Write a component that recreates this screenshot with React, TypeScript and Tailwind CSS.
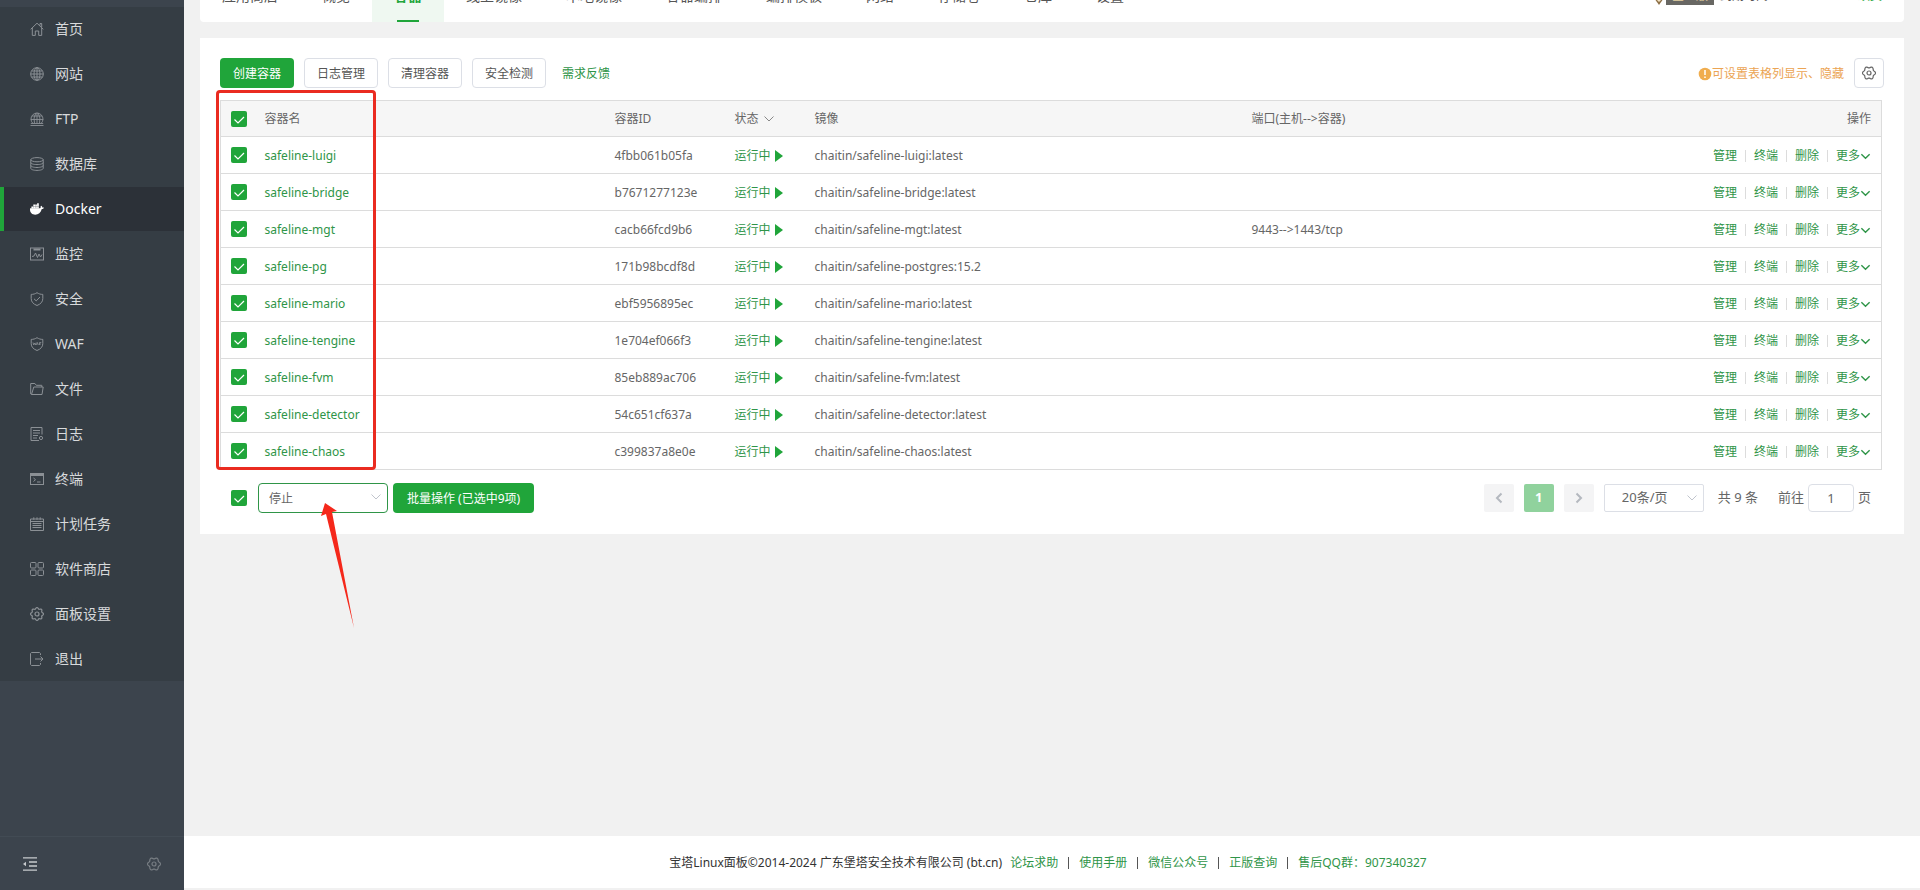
import type { ReactNode, SVGProps } from 'react'

type Container = { name: string; id: string; image: string; port?: string }

const containers: Container[] = [
  { name: 'safeline-luigi', id: '4fbb061b05fa', image: 'chaitin/safeline-luigi:latest' },
  { name: 'safeline-bridge', id: 'b7671277123e', image: 'chaitin/safeline-bridge:latest' },
  { name: 'safeline-mgt', id: 'cacb66fcd9b6', image: 'chaitin/safeline-mgt:latest', port: '9443-->1443/tcp' },
  { name: 'safeline-pg', id: '171b98bcdf8d', image: 'chaitin/safeline-postgres:15.2' },
  { name: 'safeline-mario', id: 'ebf5956895ec', image: 'chaitin/safeline-mario:latest' },
  { name: 'safeline-tengine', id: '1e704ef066f3', image: 'chaitin/safeline-tengine:latest' },
  { name: 'safeline-fvm', id: '85eb889ac706', image: 'chaitin/safeline-fvm:latest' },
  { name: 'safeline-detector', id: '54c651cf637a', image: 'chaitin/safeline-detector:latest' },
  { name: 'safeline-chaos', id: 'c399837a8e0e', image: 'chaitin/safeline-chaos:latest' },
]

const tabs = ['应用商店', '概览', '容器', '线上镜像', '本地镜像', '容器编排', '编排模板', '网络', '存储卷', '仓库', '设置']

function Icon({ children, ...rest }: { children: ReactNode } & SVGProps<SVGSVGElement>) {
  return (
    <svg viewBox="0 0 14 14" className="size-3.5 shrink-0" fill="none" stroke="currentColor" strokeWidth="1" aria-hidden="true" {...rest}>
      {children}
    </svg>
  )
}

// closed wavy outline with the given number of teeth, centred in the 14px box
function gearPath(teeth: number): string {
  const points = Array.from({ length: 72 }, (_, i) => {
    const a = (i / 72) * Math.PI * 2
    const r = 5.8 + 0.7 * Math.cos(teeth * a)
    return `${(7 + r * Math.cos(a)).toFixed(2)} ${(7 + r * Math.sin(a)).toFixed(2)}`
  })
  return `M${points.join('L')}Z`
}

const gear = <><path d={gearPath(8)} strokeWidth="1.200" /><circle cx="7" cy="7" r="2" strokeWidth="1.200" /></>
const hexGear = <><path d={gearPath(6)} strokeWidth="1.200" /><circle cx="7" cy="7" r="2" strokeWidth="1.200" /></>

const menu: { label: string; icon: ReactNode }[] = [
  { label: '首页', icon: <><path d="M.7 7.300 7 1.200l6.300 6.100M2.300 6v7.400h3V9h3.400v4.400h3V6M10 3.500v-2h1.700v3.700" /></> },
  { label: '网站', icon: <><circle cx="7" cy="7" r="6.300" /><ellipse cx="7" cy="7" rx="3" ry="6.300" /><path d="M7 .7v12.600M.7 7h12.600M1.600 4h10.800M1.600 10h10.800" /></> },
  { label: 'FTP', icon: <><path d="M3 11.500a6 6 0 1 1 8 0M.5 13.500h13M.8 11.500h12.400M7 .8v10.700M.8 7.500h12.400M2 4h10M4.500 11.500Q3 6 5.800 1M9.500 11.500Q11 6 8.200 1" strokeWidth=".9" /></> },
  { label: '数据库', icon: <><ellipse cx="7" cy="2.700" rx="6.200" ry="2.100" /><path d="M.8 2.700v8.600c0 1.200 2.800 2.100 6.200 2.100s6.200-.9 6.200-2.100V2.700M.8 5.500C.8 6.700 3.600 7.600 7 7.600s6.200-.9 6.200-2.100M.8 8.400c0 1.200 2.800 2.100 6.200 2.100s6.200-.9 6.200-2.100" /></> },
  {
    label: 'Docker',
    icon: (
      <g fill="currentColor" stroke="none">
        <path d="M.1 6.300h9.600c.8 0 1.100-.8.900-2l.7-.5c.7.500 1 1.100 1 1.700.7-.1 1.300 0 1.700.3-.4.900-1.200 1.300-2.200 1.300-1.100 3.700-3.300 5.600-6.600 5.600C1.800 12.700-.5 10.500.1 6.300z" />
        <path d="M1.400 4.500h1.700v2H1.400zM3.300 4.500H5v2H3.300zM5.200 4.500h1.700v2H5.200zM7.100 4.500h1.700v2H7.100zM3.300 2.600H5v1.700H3.300zM5.200 2.600h1.700v1.700H5.200zM7.100 1.300h1.700v3H7.100z" />
      </g>
    ),
  },
  { label: '监控', icon: <><rect x=".5" y="1" width="13" height="12" /><path d="M3.500 2.500h7" strokeWidth="2" /><path d="m2 9.500 2-.5 1.500-3 2 4.500L9 7l1.500 3L12 7.500" /></> },
  { label: '安全', icon: <><path d="M7 .7c1.800 1.200 3.700 1.700 5.800 1.700v4.200c0 3.200-2 5.400-5.800 6.900-3.800-1.500-5.800-3.700-5.800-6.900V2.400C3.300 2.400 5.200 1.900 7 .7z" /><path d="m4 6.800 2.200 2.100L10 5" /></> },
  { label: 'WAF', icon: <><path d="M7 .7c1.800 1.200 3.700 1.700 5.800 1.700v4.200c0 3.200-2 5.400-5.800 6.900-3.800-1.500-5.800-3.700-5.800-6.900V2.400C3.300 2.400 5.200 1.900 7 .7z" /><path d="M3 5.500 3.700 8l.9-2 .9 2 .7-2.500M6.500 8l.9-2.500L8.300 8M9.500 8V5.500h1.800M9.500 7h1.500" strokeWidth=".8" /></> },
  { label: '文件', icon: <><path d="M1.500 12.500H12l1.200-7.500H3.800zM1.500 12.500 .7 12V1.500h4.200l1.400 1.800h5.500V5" /></> },
  { label: '日志', icon: <><path d="M12 7.500v-7H1v13h8M3 3.500h7M3 6h7M3 8.500h5M3 11h4" /><circle cx="11" cy="11" r="1.600" /></> },
  { label: '终端', icon: <><rect x=".5" y="1.500" width="13" height="11" /><path d="M1 3h12" strokeWidth="2" /><path d="m3.500 6 2 1.700-2 1.800M7 10h3.500" /></> },
  { label: '计划任务', icon: <><path d="M.5 2h13v11.500H.5zM.5 4.500h13M3.800.3v2.500M7 .3v2.500M10.200.3v2.500M2.500 6.500h9M2.500 8.500h9M2.500 10.500h9" /></> },
  { label: '软件商店', icon: <><rect x=".5" y=".5" width="5.500" height="5.500" rx="1" /><rect x="8" y=".5" width="5.500" height="5.500" rx="1" /><rect x=".5" y="8" width="5.500" height="5.500" rx="1" /><rect x="8" y="8" width="5.500" height="5.500" rx="1" /></> },
  { label: '面板设置', icon: gear },
  { label: '退出', icon: <><path d="M10.500 3V1.500l-1-1H1.500l-1 1v11l1 1h8l1-1V11M5 7h8M10.500 4.500 13 7l-2.500 2.500" /></> },
]

function Check({ label }: { label: string }) {
  return (
    <span className="relative block size-4">
      <input type="checkbox" defaultChecked aria-label={label} className="block size-4 appearance-none rounded-xs bg-[#20a53a]" />
      <svg viewBox="0 0 16 16" className="pointer-events-none absolute inset-0 size-4" fill="none" stroke="#fff" strokeWidth="1.200" aria-hidden="true">
        <path d="m3.500 8.500 3.500 3.500 6-6" />
      </svg>
    </span>
  )
}

function Chevron({ className }: { className: string }) {
  return (
    <svg viewBox="0 0 12 12" className={className} fill="none" stroke="currentColor" aria-hidden="true">
      <path d="m1.500 3.500 4.500 4.500 4.500-4.500" />
    </svg>
  )
}

function Sidebar() {
  return (
    <aside className="flex w-46 shrink-0 flex-col bg-[#3c444d] pt-[7px]">
      <nav className="flex flex-col gap-px bg-[#353d44]">
        {menu.map(item => {
          const active = item.label === 'Docker'
          return (
            <a
              key={item.label}
              href="#"
              className={`flex h-11 items-center gap-[11px] border-l-4 pl-[26px] text-sm ${active ? 'border-[#20a53a] bg-[#2c3138] text-white' : 'border-transparent text-[#d8dadc]'}`}
            >
              <span className={active ? 'text-white' : 'text-[#8b9095]'}><Icon>{item.icon}</Icon></span>
              {item.label}
            </a>
          )
        })}
      </nav>
      <div className="mt-auto flex h-[54px] items-center justify-between border-t border-[#424b54] px-[23px]">
        <button aria-label="收起" className="text-[#c6cacd]">
          <Icon strokeWidth="1.300"><path d="M0 .8h14M6 5h8M6 9h8M0 13.200h14" /><path d="M0 7l3-2.300v4.600z" fill="currentColor" stroke="none" /></Icon>
        </button>
        <button aria-label="设置" className="text-[#777d83]"><Icon>{hexGear}</Icon></button>
      </div>
    </aside>
  )
}

function TabBar() {
  return (
    <div className="flex h-[22px] items-end justify-between overflow-hidden rounded-b bg-white text-sm text-[#555]">
      <div className="flex h-[52px]">
        {tabs.map(tab => (
          <button key={tab} className={`relative px-[22px] ${tab === '容器' ? 'bg-[#eff8f1] font-bold text-[#20a53a]' : ''}`}>
            {tab}
            {tab === '容器' && <span className="absolute bottom-0 left-[25px] h-0.5 w-[22px] bg-[#20a53a]" />}
          </button>
        ))}
      </div>
      <div className="flex h-[52px] items-center pr-[22px] text-xs">
        <svg viewBox="0 0 14 20" className="h-5 w-3.5" aria-hidden="true">
          <path d="M0 9h14l-7 10z" fill="#8d6f45" />
          <path d="m3 11 4 4 4-4" fill="none" stroke="#f3e3c3" strokeWidth="1.500" />
        </svg>
        <span className="mr-1.5 flex h-[18px] w-12 items-center justify-center bg-[#686763] text-[#e6d3a3]">企业版</span>
        <span>到期时间</span>
        <a href="#" className="ml-[90px] text-[#20a53a]">续费</a>
      </div>
    </div>
  )
}

function Toolbar() {
  return (
    <div className="flex h-[30px] items-center justify-between">
      <div className="flex items-center gap-2.5">
        <button className="h-[30px] w-[74px] rounded bg-[#20a53a] pt-px text-white">创建容器</button>
        {['日志管理', '清理容器', '安全检测'].map(label => (
          <button key={label} className="h-[30px] w-[74px] rounded border border-[#dcdfe6] pt-px text-[#555]">{label}</button>
        ))}
        <a href="#" className="ml-1.5 pt-px text-[#2f9548]">需求反馈</a>
      </div>
      <div className="flex items-center gap-2.5 text-[#eba453]">
        <span className="flex items-center pt-px">
          <svg viewBox="0 0 14 14" className="size-3.5" aria-hidden="true">
            <circle cx="7" cy="7" r="6.300" fill="#f0ad4e" />
            <path d="M7 3v5M7 9.500v1.500" stroke="#fff" strokeWidth="1.500" />
          </svg>
          可设置表格列显示、隐藏
        </span>
        <button aria-label="列设置" className="flex size-[30px] items-center justify-center rounded border border-[#dcdfe6] text-[#666]">
          <Icon>{hexGear}</Icon>
        </button>
      </div>
    </div>
  )
}

function ContainerTable() {
  return (
    <table className="w-full table-fixed border-collapse border border-[#dcdcdc] text-left">
      <colgroup>
        <col className="w-9" />
        <col className="w-[350px]" />
        <col className="w-[120px]" />
        <col className="w-20" />
        <col />
        <col className="w-[400px]" />
        <col className="w-[238px]" />
      </colgroup>
      <thead>
        <tr className="h-9 bg-[#f6f6f6] text-[#666]">
          <th className="pl-2.5"><Check label="全选" /></th>
          <th className="pl-2 font-normal">容器名</th>
          <th className="pl-2 font-normal">容器ID</th>
          <th className="pt-px pl-2 font-normal">
            <button className="flex items-center gap-1">状态 <Chevron className="size-3 text-[#888]" /></button>
          </th>
          <th className="pl-2 font-normal">镜像</th>
          <th className="pl-2 font-normal">端口(主机--&gt;容器)</th>
          <th className="pr-2.5 text-right font-normal">操作</th>
        </tr>
      </thead>
      <tbody>
        {containers.map(c => (
          <tr key={c.id} className="h-[37px] border-t border-[#dcdcdc]">
            <td className="pl-2.5"><Check label={c.name} /></td>
            <td className="pt-0.5 pl-2"><a href="#" className="text-[#2f9548]">{c.name}</a></td>
            <td className="pt-0.5 pl-2">{c.id}</td>
            <td className="pt-0.5 pl-2">
              <button className="flex items-center gap-[3px] text-[#2f9548]">
                运行中
                <svg viewBox="0 0 9 12" className="h-3 w-[9px]" fill="#20a53a" aria-hidden="true"><path d="M1 0v12l8-6z" /></svg>
              </button>
            </td>
            <td className="pt-0.5 pl-2">{c.image}</td>
            <td className="pt-0.5 pl-2">{c.port}</td>
            <td className="pt-0.5 pr-2.5">
              <div className="flex items-center justify-end gap-2 text-[#2f9548]">
                <a href="#">管理</a>
                <span className="h-3 w-px bg-[#dcdcdc]" />
                <a href="#">终端</a>
                <span className="h-3 w-px bg-[#dcdcdc]" />
                <a href="#">删除</a>
                <span className="h-3 w-px bg-[#dcdcdc]" />
                <button className="flex items-center">更多<Chevron className="size-[11px] stroke-[1.5]" /></button>
              </div>
            </td>
          </tr>
        ))}
      </tbody>
    </table>
  )
}

function TableFooter() {
  return (
    <div className="mt-3 flex h-8 items-center justify-between pl-[11px]">
      <div className="flex items-center">
        <Check label="选择全部容器" />
        <div className="relative ml-[11px]">
          <select aria-label="批量操作" className="block h-[30px] w-[130px] appearance-none rounded border border-[#2f9548] bg-white pt-px pl-2.5">
            <option>停止</option>
          </select>
          <Chevron className="pointer-events-none absolute top-2 right-1.5 size-3 text-[#c0c4cc]" />
        </div>
        <button className="ml-[5px] h-[30px] w-[141px] rounded bg-[#20a53a] pt-px text-white">批量操作 (已选中9项)</button>
      </div>
      <div className="flex items-center text-[13px]">
        <button aria-label="上一页" className="flex h-7 w-[30px] items-center justify-center rounded-xs bg-[#f4f4f5] text-[#b4b8bf]">
          <Chevron className="size-3 rotate-90 stroke-2" />
        </button>
        <button className="ml-2.5 h-7 w-[30px] rounded-xs bg-[#90d29d] font-bold text-white">1</button>
        <button aria-label="下一页" className="ml-2.5 flex h-7 w-[30px] items-center justify-center rounded-xs bg-[#f4f4f5] text-[#b4b8bf]">
          <Chevron className="size-3 -rotate-90 stroke-2" />
        </button>
        <div className="relative ml-2.5">
          <select aria-label="每页条数" className="block h-7 w-[100px] appearance-none rounded-xs border border-[#dcdfe6] bg-white pl-[17px]">
            <option>20条/页</option>
          </select>
          <Chevron className="pointer-events-none absolute top-2 right-1.5 size-3 text-[#c0c4cc]" />
        </div>
        <span className="ml-3.5">共 9 条</span>
        <label htmlFor="page" className="ml-5">前往</label>
        <input id="page" defaultValue="1" className="mx-1 h-7 w-[46px] rounded border border-[#dcdfe6] text-center" />
        <span className="mr-[13px]">页</span>
      </div>
    </div>
  )
}

function PageFooter() {
  const links = ['论坛求助', '使用手册', '微信公众号', '正版查询', '售后QQ群：907340327']
  return (
    <footer className="mt-auto mb-0.5 flex h-[52px] items-center justify-center gap-2 bg-white pt-0.5 pr-2 text-xs text-[#333]">
      <span>宝塔Linux面板©2014-2024 广东堡塔安全技术有限公司 (bt.cn)</span>
      <div className="flex items-center gap-2.5">
        {links.map((link, i) => (
          <span key={link} className="flex items-center gap-2.5">
            {i > 0 && <span className="h-3 w-px bg-[#555]" />}
            <a href="#" className="text-[#2f9548]">{link}</a>
          </span>
        ))}
      </div>
    </footer>
  )
}

export default function App() {
  return (
    <div className="flex min-h-screen bg-[#f1f1f1] font-['Noto_Sans','Noto_Sans_CJK_SC',sans-serif] text-xs text-[#666]">
      <Sidebar />
      <main className="flex min-w-0 flex-1 flex-col">
        <div className="px-4">
          <TabBar />
          <section className="relative mt-4 bg-white p-5">
            <Toolbar />
            <div className="mt-3 pr-0.5">
              <ContainerTable />
            </div>
            <TableFooter />
            {/* callout around the ticked rows, arrow to the batch action */}
            <div className="pointer-events-none absolute top-[52px] left-4 h-[380px] w-[160px] rounded border-3 border-[#ea2b20]" />
            <svg viewBox="0 0 36 130" className="pointer-events-none absolute top-[464px] left-[120px] h-[130px] w-9" aria-hidden="true">
              <path d="M5 1 1 14l5-2 28 114L12 10l5-1z" fill="#f5281b" />
            </svg>
          </section>
        </div>
        <PageFooter />
      </main>
    </div>
  )
}
